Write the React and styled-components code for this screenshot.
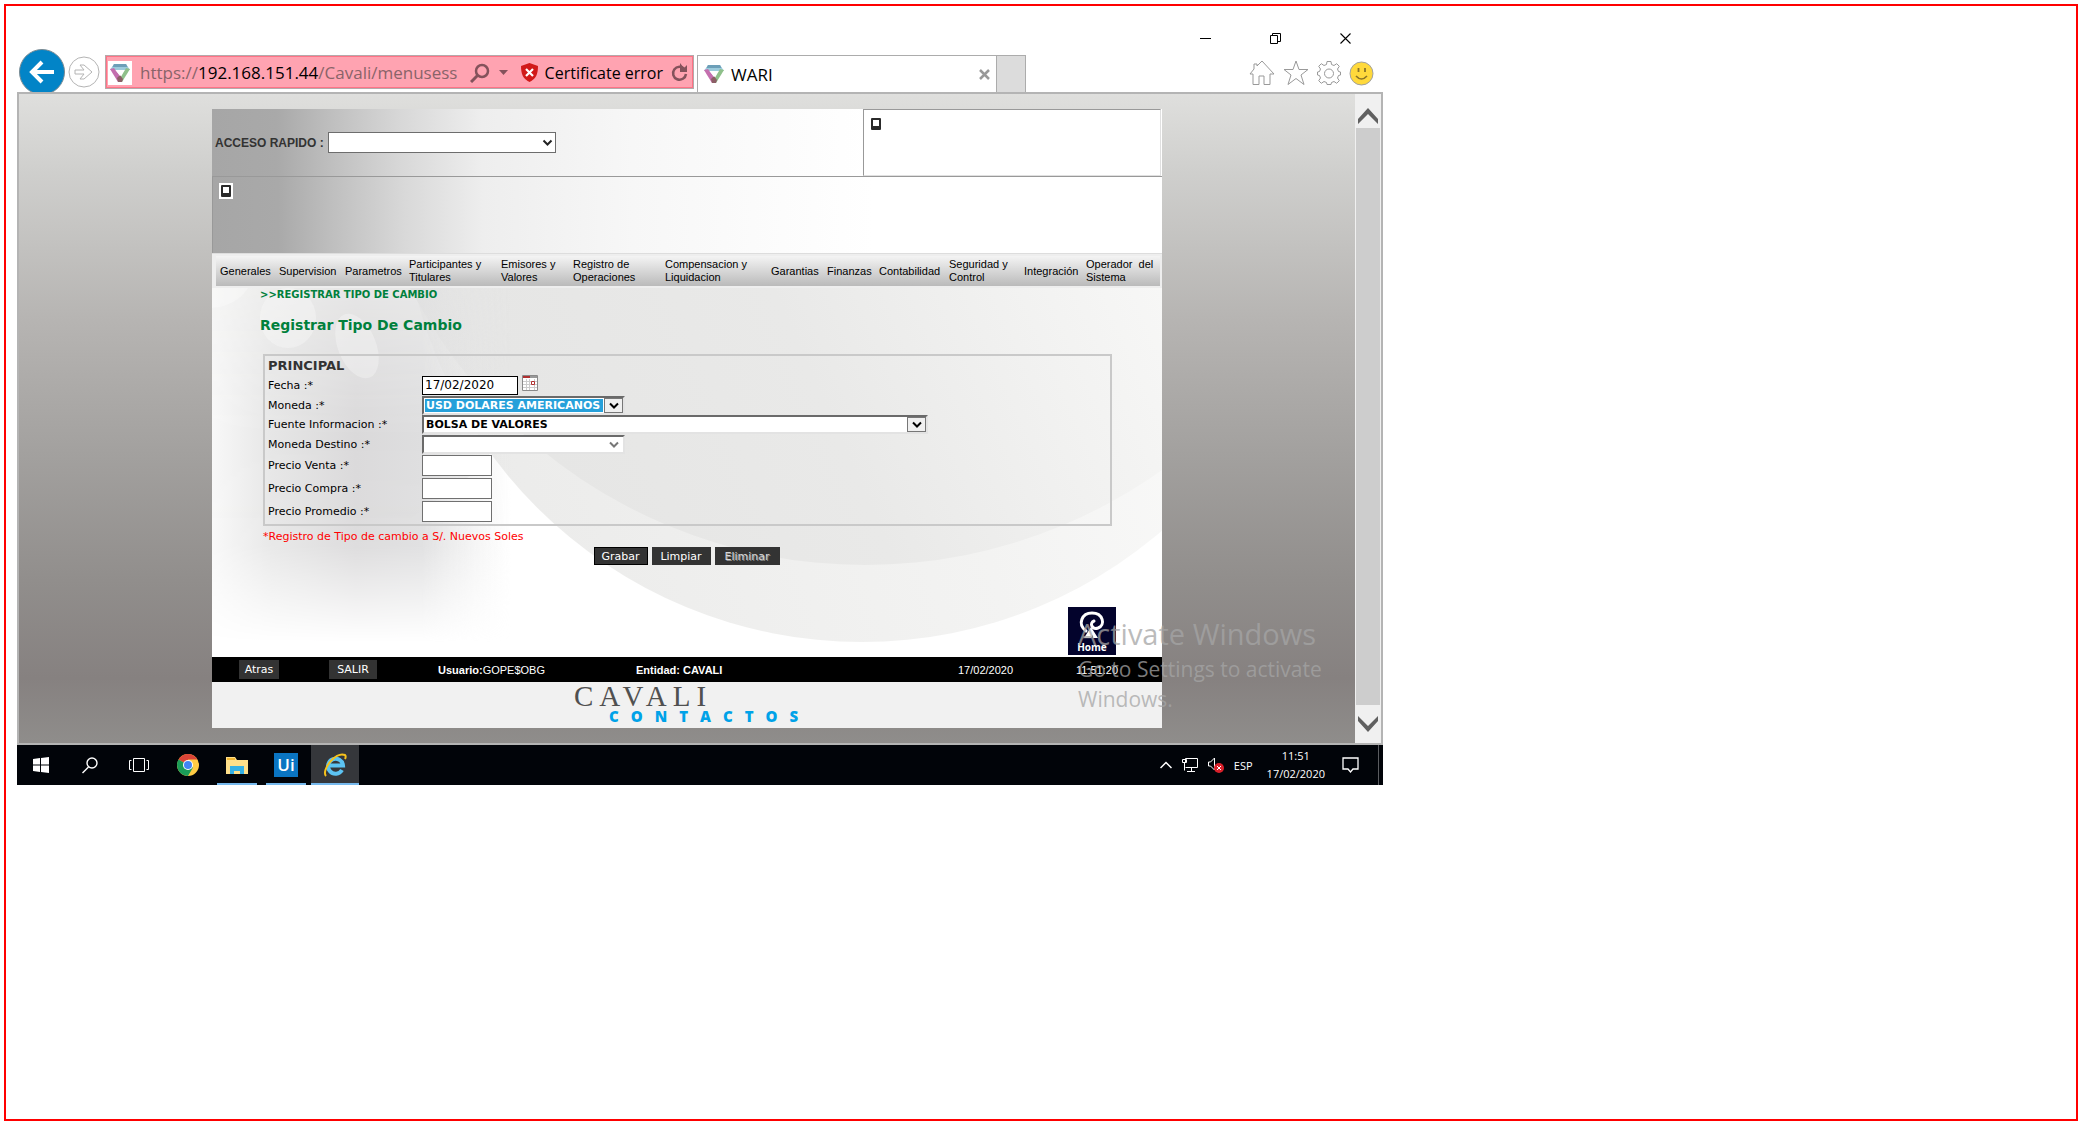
import React from "react";
import styled, { createGlobalStyle } from "styled-components";

const verdana = `Verdana, "DejaVu Sans", sans-serif`;
const arial = `Arial, "Liberation Sans", sans-serif`;
const segoe = `"Segoe UI", "Open Sans", "Noto Sans", sans-serif`;

const GlobalStyle = createGlobalStyle`
  * { box-sizing: border-box; }
  body { margin: 0; background: #fff; font-family: ${arial}; color: #000; }
  button, input, select { font: inherit; color: inherit; margin: 0; border-radius: 0; }
  button { padding: 0; border: 0; background: none; }
  h1, p { margin: 0; }
  svg { display: block; }
`;

const Frame = styled.div`
  margin: 4px;
  min-height: calc(100vh - 8px);
  padding: 0 11px;
  border: 2px solid #f00;
`;

const Desktop = styled.div`
  position: relative;
  width: 100%;
  max-width: 1366px;
`;

/* ---------- browser chrome ---------- */

const TitleBar = styled.div`
  display: flex;
  justify-content: flex-end;
  align-items: center;
  gap: 59px;
  padding: 22px 32px 0 0;
  height: 43px;
`;

const ChromeButton = styled.button`
  display: flex;
  align-items: center;
  justify-content: center;
  flex: none;
`;

const NavBar = styled.div`
  display: flex;
  align-items: flex-start;
  height: 43px;
  padding-left: 2px;
  overflow: hidden;
`;

const RoundButton = styled(ChromeButton)`
  width: ${(p) => p.$size}px;
  height: 46px;
`;

const AddressBar = styled.div`
  display: flex;
  align-items: center;
  flex: 0 1 589px;
  min-width: 0;
  height: 34px;
  margin: 6px 3px 0 3px;
  padding: 1px 5px 0 2px;
  border: 1px solid #b5a9ab;
  box-shadow: inset 0 0 0 1px #ff7386;
  background: #ffa3b1;
  font-family: ${segoe};
  font-size: 17px;
`;

const SiteIcon = styled.span`
  display: flex;
  align-items: center;
  justify-content: center;
  flex: none;
  width: 24px;
  height: 24px;
  background: #fff;
`;

const Url = styled.p`
  flex: 1;
  min-width: 0;
  overflow: hidden;
  padding-left: 8px;
  white-space: nowrap;
  color: #8a6369;
  b { font-weight: 400; color: #000; }
`;

const CertError = styled.button`
  display: flex;
  align-items: center;
  gap: 7px;
  margin: 0 8px 0 13px;
  font-size: 16px;
  white-space: nowrap;
`;

const AddressTools = styled.div`
  display: flex;
  align-items: center;
  gap: 9px;
`;

const Tab = styled.div`
  display: flex;
  align-items: center;
  gap: 7px;
  flex: 0 1 300px;
  height: 37px;
  margin-top: 6px;
  padding: 0 6px 0 6px;
  border: 1px solid #acacac;
  border-bottom: 0;
  font-family: ${segoe};
  font-size: 17px;
  span { flex: 1; }
`;

const NewTab = styled.button`
  width: 29px;
  height: 37px;
  margin-top: 6px;
  border: solid #acacac;
  border-width: 1px 1px 0 0;
  background: #dcdcdc;
`;

const ChromeTools = styled.div`
  display: flex;
  align-items: center;
  gap: 8px;
  height: 48px;
  margin-left: auto;
  padding-right: 9px;
`;

/* ---------- viewport ---------- */

const Viewport = styled.div`
  display: flex;
  border: 2px solid #b4b4b4;
`;

const PageArea = styled.main`
  flex: 1;
  min-width: 0;
  padding: 15px;
  background: linear-gradient(#dfdfdd 0, #cfcfcd 12%, #b6b4b2 35%, #a3a19f 55%, #918e8c 75%, #868180 90%, #8f8d8b 100%);
`;

const Panel = styled.div`
  width: 100%;
  max-width: 950px;
  margin: 0 auto;
  background: #fff;
`;

const ScrollBar = styled.div`
  display: flex;
  flex-direction: column;
  width: 26px;
  padding: 0 1px;
  background: #f0f0f0;
`;

const ScrollArrow = styled(ChromeButton)`
  height: ${(p) => p.$height}px;
  padding-top: ${(p) => p.$shift}px;
`;

const ScrollThumb = styled.div`
  flex: 1;
  background: #cdcdcd;
`;

/* ---------- application header ---------- */

const headerFill = `linear-gradient(90deg, #a6a6a6 0, #a9a9a9 65px, #bfbfbf 120px, #d8d8d8 190px, #eeeeee 270px, #f7f7f7 420px, #fff 660px)`;

const QuickRow = styled.div`
  display: flex;
  justify-content: space-between;
  height: 67px;
  padding-right: 1px;
  background: ${headerFill};
`;

const QuickAccess = styled.div`
  display: flex;
  align-items: center;
  padding-left: 3px;
  font-size: 12px;
  font-weight: 700;
  color: #333;
  label { margin-right: 4px; white-space: nowrap; }
`;

const LogoBox = styled.div`
  width: 298px;
  padding: 6px 5px;
  border: 1px solid #999;
  border-color: #999 #e0e0e0 #e0e0e0 #999;
  background: #fff;
`;

const Banner = styled.div`
  height: 77px;
  padding: 6px;
  border-top: 1px solid #999;
  border-left: 1px solid #999;
  background: ${headerFill};
`;

const Menu = styled.nav`
  display: grid;
  grid-template-columns: 59fr 66fr 64fr 92fr 72fr 92fr 106fr 56fr 52fr 70fr 75fr 62fr 78fr;
  align-items: center;
  height: 35px;
  padding: 2px 2px 2px 4px;
  border-top: 1px solid #ddd;
  background: linear-gradient(#f4f4f4, #bababa) content-box, #eee;
`;

const MenuItem = styled.button`
  padding-left: 4px;
  text-align: left;
  font-size: 11px;
  line-height: 13px;
  white-space: pre;
`;

/* ---------- form ---------- */

const Content = styled.section`
  position: relative;
  isolation: isolate;
  height: 369px;
  padding: 0 46px 0 48px;
  font-family: ${verdana};
`;

const Backdrop = styled.svg`
  position: absolute;
  inset: 0;
  z-index: -1;
  width: 100%;
  height: 100%;
`;

const Crumb = styled.p`
  font-size: 10px;
  line-height: 13px;
  font-weight: 700;
  color: #00803c;
`;

const Heading = styled.h1`
  margin: 16px 0 20px;
  font-size: 14px;
  line-height: 17px;
  font-weight: 700;
  color: #00803c;
`;

const Group = styled.div`
  margin: 0 4px 0 3px;
  padding: 0 3px 1px;
  border: 2px solid #c9c9c9;
`;

const GroupTitle = styled.p`
  font-size: 13px;
  line-height: 19px;
  font-weight: 700;
  color: #333;
`;

const Field = styled.div`
  display: flex;
  align-items: center;
  height: ${(p) => p.$height}px;
  font-size: 11px;
  label { flex: none; width: 154px; }
`;

const TextBox = styled.input`
  width: ${(p) => p.$width}px;
  height: ${(p) => p.$height}px;
  padding: 0 2px;
  border: 1px solid ${(p) => p.$border};
  background: #fff;
  font-size: 12px;
`;

const CalendarButton = styled.button`
  margin: 0 0 4px 4px;
`;

const SelectShell = styled.span`
  position: relative;
  display: block;
  width: ${(p) => p.$width}px;
  svg { position: absolute; pointer-events: none; }
`;

const PlainSelect = styled.select`
  display: block;
  appearance: none;
  width: 100%;
  height: 21px;
  border: 1px solid #6d6d6d;
  background: #fff;
`;

const PlainArrow = styled.svg`
  top: 7px;
  right: 3px;
`;

const InsetSelect = styled.select`
  display: block;
  appearance: none;
  width: 100%;
  height: 19px;
  padding: 0 22px 0 2px;
  border: 2px solid #6a6a6a;
  border-color: #6a6a6a #e3e3e3 #e3e3e3 #6a6a6a;
  background: ${(p) => (p.$active ? "linear-gradient(#26a0da, #26a0da) 1px 1px / calc(100% - 21px) 13px no-repeat #fff" : "#fff")};
  color: ${(p) => (p.$active ? "#fff" : "#000")};
  font-size: 11px;
  font-weight: 700;
`;

const InsetArrow = styled.svg`
  top: 2px;
  right: 2px;
`;

const Note = styled.p`
  margin: 3px 0 3px 3px;
  font-size: 11px;
  line-height: 15px;
  color: #f00;
`;

const Actions = styled.div`
  display: flex;
  justify-content: center;
  gap: 4px;
  padding-right: 3px;
`;

const DarkButton = styled.button`
  height: ${(p) => p.$height}px;
  min-width: ${(p) => p.$width}px;
  border: 1px solid ${(p) => (p.$focus ? "#000" : "#333")};
  background: #333;
  color: ${(p) => (p.$dim ? "#d8d8d8" : "#fff")};
  text-shadow: ${(p) => (p.$dim ? "1px 1px 0 #8a8a8a" : "none")};
  font-family: ${verdana};
  font-size: 11px;
`;

const HomeRow = styled.div`
  display: flex;
  justify-content: flex-end;
  margin-top: 42px;
`;

/* ---------- page footer ---------- */

const StatusBar = styled.footer`
  display: grid;
  grid-template-columns: 90fr 109fr 198fr 322fr 118fr 86fr;
  align-items: center;
  justify-items: start;
  height: 25px;
  padding-left: 27px;
  background: #000;
  color: #fff;
  font-size: 11px;
`;

const Brand = styled.div`
  display: flex;
  flex-direction: column;
  align-items: flex-start;
  height: 46px;
  padding-left: 362px;
  background: #f1f1f1;
`;

const BrandName = styled.span`
  font-family: "Liberation Serif", serif;
  font-size: 29px;
  line-height: 28px;
  letter-spacing: 6px;
  color: #505050;
`;

const BrandLink = styled.a`
  padding-left: 35px;
  font-family: ${segoe};
  font-size: 15px;
  line-height: 13px;
  font-weight: 800;
  letter-spacing: 12px;
  color: #00a2e8;
  text-decoration: none;
`;

/* ---------- desktop overlay and task bar ---------- */

const Watermark = styled.div`
  position: absolute;
  left: 1061px;
  top: 608px;
  width: 280px;
  font-family: ${segoe};
  color: rgba(165, 165, 165, 0.75);
  pointer-events: none;
`;

const WatermarkTitle = styled.p`
  font-size: 29px;
  line-height: 40px;
`;

const WatermarkText = styled.p`
  font-size: 21px;
  line-height: 30px;
`;

const TaskBar = styled.div`
  display: flex;
  align-items: stretch;
  height: 40px;
  background: #010409;
  color: #fff;
  font-family: ${segoe};
  font-size: 11px;
`;

const TaskButton = styled(ChromeButton)`
  width: 48px;
  margin-right: 1px;
  background: ${(p) =>
    p.$open
      ? `linear-gradient(#76b9ed, #76b9ed) bottom / ${p.$active ? 48 : 40}px 2px no-repeat`
      : "none"};
  background-color: ${(p) => (p.$active ? "#35373b" : "transparent")};
`;

const Tray = styled.div`
  display: flex;
  align-items: center;
  gap: 10px;
  margin-left: auto;
  padding-right: 4px;
`;

const Clock = styled.time`
  margin: 0 7px 0 4px;
  text-align: center;
  line-height: 18px;
`;

const TrayEdge = styled.span`
  width: 1px;
  height: 40px;
  margin-left: 9px;
  background: #5a5c60;
`;

/* ---------- drawings ---------- */

const WariIcon = () => (
  <svg width="20" height="18" viewBox="0 0 20 18">
    <path d="M4 0h12l4 6H0z" fill="#9ccbdc" />
    <path d="M4 0h12l1.500 3H2.500z" fill="#6c9fb8" />
    <path d="M0 5l4-1 7 9-3 5z" fill="#c46fae" />
    <path d="M20 5l-4-1-8 14h4z" fill="#8fc08a" />
    <path d="M7 14l3-3 3 4-1 3H8z" fill="#8c5f66" />
    <path d="M5.500 6h9L10 12z" fill="#fff" />
  </svg>
);

const BrokenImage = ({ boxed }) => (
  <svg width="14" height="16" viewBox="0 0 14 16" role="img" aria-label="imagen">
    {boxed && <path d="M0 0h14v16H0z" fill="#fff" />}
    <rect x="2" y="2" width="10" height="12" rx="1" fill="#2a2a2a" />
    <path d="M4 4h6v6H4z" fill="#fff" />
  </svg>
);

const Check = ({ color = "#222" }) => (
  <path d="M1.500 1.500L5.500 5.500L9.500 1.500" fill="none" stroke={color} strokeWidth="2" />
);

const ClassicArrow = ({ flat }) => (
  <InsetArrow width="19" height="15" viewBox="0 0 19 15">
    {!flat && <rect x="0.500" y="0.500" width="18" height="14" fill="#f0f0f0" stroke="#777" />}
    <g transform="translate(4.500 4)">
      <Check color={flat ? "#777" : "#000"} />
    </g>
  </InsetArrow>
);

const ContentBackdrop = () => (
  <Backdrop viewBox="0 0 950 369" preserveAspectRatio="none" aria-hidden="true">
    <defs>
      <linearGradient id="outer" x1="0" y1="0.600" x2="1" y2="0.300">
        <stop offset="0" stopColor="#ebebea" />
        <stop offset="0.500" stopColor="#f3f3f2" />
        <stop offset="1" stopColor="#fff" />
      </linearGradient>
      <linearGradient id="inner" x1="0" y1="0.900" x2="0.900" y2="0.500">
        <stop offset="0" stopColor="#e4e4e3" />
        <stop offset="0.450" stopColor="#e9e9e8" />
        <stop offset="0.750" stopColor="#f5f5f4" />
        <stop offset="1" stopColor="#fefefe" />
      </linearGradient>
      <linearGradient id="side" x1="0" x2="1" y1="0" y2="0">
        <stop offset="0" stopColor="#f8f8f8" />
        <stop offset="0.200" stopColor="#e6e6e6" />
        <stop offset="0.480" stopColor="#dad9da" />
        <stop offset="0.700" stopColor="#dededf" />
        <stop offset="1" stopColor="#e8e8e8" stopOpacity="0" />
      </linearGradient>
      <linearGradient id="fade" x1="0" x2="0" y1="0" y2="1">
        <stop offset="0" stopColor="#fff" stopOpacity="0.500" />
        <stop offset="0.400" stopColor="#fff" stopOpacity="1" />
        <stop offset="0.700" stopColor="#fff" stopOpacity="0.900" />
        <stop offset="0.960" stopColor="#fff" stopOpacity="0" />
      </linearGradient>
      <mask id="sideMask">
        <rect width="320" height="369" fill="url(#fade)" />
      </mask>
    </defs>
    <path d="M0 0H950V369H0z" fill="#fff" />
    <path d="M0 0H300Q235 90 280 172L200 230H0z" fill="#ececeb" opacity="0.700" />
    <circle cx="650" cy="-106" r="460" fill="url(#outer)" />
    <circle cx="653" cy="-235" r="512" fill="url(#inner)" />
    <rect width="300" height="369" fill="url(#side)" mask="url(#sideMask)" />
    <g fill="#fff" opacity="0.300">
      <path d="M0 0H36Q24 18 0 20z" />
      <ellipse cx="76" cy="30" rx="28" ry="30" />
      <ellipse cx="145" cy="58" rx="19" ry="34" transform="rotate(-22 145 58)" />
    </g>
  </Backdrop>
);

const HomeIcon = () => (
  <svg width="48" height="48" viewBox="0 0 48 48">
    <path d="M0 0h48v48H0z" fill="#03032c" />
    <path d="M18 24C9 17 14 6 24 6C35 6 38 18 30 21C24 23 21 16 26 14" fill="none" stroke="#fff" strokeWidth="3" strokeLinecap="round" />
    <path d="M23 20l7 11h-5v-3l-2 3h-7z" fill="#fff" />
    <text x="24" y="44" fill="#fff" fontFamily="Open Sans, sans-serif" fontSize="10" fontWeight="700" textAnchor="middle">Home</text>
  </svg>
);

const menuItems = [
  "Generales",
  "Supervision",
  "Parametros",
  "Participantes y\nTitulares",
  "Emisores y\nValores",
  "Registro de\nOperaciones",
  "Compensacion y\nLiquidacion",
  "Garantias",
  "Finanzas",
  "Contabilidad",
  "Seguridad y\nControl",
  "Integración",
  "Operador  del\nSistema",
];

const prices = [
  ["venta", "Precio Venta :*"],
  ["compra", "Precio Compra :*"],
  ["promedio", "Precio Promedio :*"],
];

function BrowserChrome() {
  return (
    <>
      <TitleBar>
        <ChromeButton aria-label="Minimize">
          <svg width="11" height="11"><path d="M0 5.500h11" stroke="#000" /></svg>
        </ChromeButton>
        <ChromeButton aria-label="Restore">
          <svg width="11" height="11" fill="none" stroke="#000">
            <path d="M0.500 2.500h7v8h-7zM2.500 2.500v-2h8v8h-3" />
          </svg>
        </ChromeButton>
        <ChromeButton aria-label="Close">
          <svg width="11" height="11"><path d="M0.500 0.500l10 10M10.500 0.500l-10 10" stroke="#000" strokeWidth="1.100" /></svg>
        </ChromeButton>
      </TitleBar>
      <NavBar>
        <RoundButton $size={46} aria-label="Back">
          <svg width="46" height="46" viewBox="0 0 46 46">
            <circle cx="23" cy="23" r="22.500" fill="#0284c7" stroke="#7a8a92" />
            <path d="M35 23H14M23 13L13 23L23 33" fill="none" stroke="#fff" strokeWidth="4" />
          </svg>
        </RoundButton>
        <RoundButton $size={37} aria-label="Forward">
          <svg width="32" height="32" viewBox="0 0 32 32" fill="none" stroke="#b4b4b4">
            <circle cx="16" cy="16" r="15" />
            <path d="M7 14h9l-4-5h4l8 7-8 7h-4l4-5H7z" />
          </svg>
        </RoundButton>
        <AddressBar>
          <SiteIcon><WariIcon /></SiteIcon>
          <Url>https://<b>192.168.151.44</b>/Cavali/menusess</Url>
          <AddressTools>
            <ChromeButton aria-label="Search">
              <svg width="20" height="20" fill="none" stroke="#84525b">
                <circle cx="12" cy="8" r="6" strokeWidth="2.500" />
                <path d="M8 12l-7 7" strokeWidth="3" />
              </svg>
            </ChromeButton>
            <ChromeButton aria-label="Show address list">
              <svg width="9" height="5"><path d="M0 0h9L4.500 5z" fill="#84525b" /></svg>
            </ChromeButton>
          </AddressTools>
          <CertError>
            <svg width="17" height="19" viewBox="0 0 17 19">
              <path d="M8.500 0L17 3C17 11 15 16 8.500 19C2 16 0 11 0 3z" fill="#d11a1a" />
              <path d="M5 6l7 7M12 6l-7 7" stroke="#fff" strokeWidth="2.200" />
            </svg>
            Certificate error
          </CertError>
          <ChromeButton aria-label="Refresh">
            <svg width="17" height="19" viewBox="0 0 17 19">
              <path d="M13.500 6A6.500 6.500 0 1 0 15 11" fill="none" stroke="#84525b" strokeWidth="2.500" />
              <path d="M9 0v9h7V2l-3 3z" fill="#84525b" />
            </svg>
          </ChromeButton>
        </AddressBar>
        <Tab>
          <WariIcon />
          <span>WARI</span>
          <ChromeButton aria-label="Close tab">
            <svg width="11" height="11"><path d="M1 1l9 9M10 1l-9 9" stroke="#999" strokeWidth="2.500" /></svg>
          </ChromeButton>
        </Tab>
        <NewTab aria-label="New tab" />
        <ChromeTools>
          <ChromeButton aria-label="Home">
            <svg width="26" height="26" viewBox="0 0 26 26" fill="none" stroke="#999">
              <path d="M4 14v10.500h6V16h5v8.500h6V14h4L13 1 8 6V4H5v5L1 14z" />
            </svg>
          </ChromeButton>
          <ChromeButton aria-label="Favorites">
            <svg width="26" height="26" viewBox="0 0 26 26" fill="none" stroke="#999">
              <path d="M13 1l3 8.500h9l-7 5.500 3 9.500-8-6-8 6 3-9.500-7-5.500h9z" />
            </svg>
          </ChromeButton>
          <ChromeButton aria-label="Tools">
            <svg width="24" height="24" viewBox="0 0 24 24" fill="none" stroke="#999">
              <path d="M10 .5h4l.5 3 2.500 1 2.700-1.800 2.600 2.600L20.500 8l1 2.500 2 .5v3l-2 .5-1 2.500 1.800 2.700-2.600 2.600-2.700-1.800-2.500 1-.5 2h-4l-.5-2-2.500-1-2.700 1.800-2.600-2.600L3.500 17l-1-2.500-2-.5v-3l2-.5 1-2.500-1.800-2.700 2.600-2.600L7 4.500l2.500-1z" />
              <circle cx="12" cy="12.500" r="4.500" />
            </svg>
          </ChromeButton>
          <ChromeButton aria-label="Feedback">
            <svg width="25" height="25" viewBox="0 0 25 25">
              <circle cx="12.500" cy="12.500" r="11.500" fill="#ffd93b" stroke="#a0a0a0" />
              <path d="M7 15q5.500 6 11 0" fill="none" stroke="#8a7428" strokeWidth="1.600" />
              <path d="M9.500 7v4M16 7v4" stroke="#8a7428" strokeWidth="1.800" />
            </svg>
          </ChromeButton>
        </ChromeTools>
      </NavBar>
    </>
  );
}

function RateForm() {
  return (
    <Content>
      <ContentBackdrop />
      <Crumb>&gt;&gt;REGISTRAR TIPO DE CAMBIO</Crumb>
      <Heading>Registrar Tipo De Cambio</Heading>
      <Group>
        <GroupTitle>PRINCIPAL</GroupTitle>
        <Field $height={20}>
          <label htmlFor="fecha">Fecha :*</label>
          <TextBox id="fecha" $width={96} $height={19} $border="#000" defaultValue="17/02/2020" />
          <CalendarButton aria-label="Calendario">
            <svg width="16" height="16" viewBox="0 0 16 16">
              <path d="M.5.500h15v15H.5z" fill="#fff" stroke="#8a8a8a" />
              <path d="M1 1h14v2H1z" fill="#999" />
              <path d="M1 1h7v2H1z" fill="#b03030" />
              <path d="M1 6.500h14M1 9.500h14M1 12.500h14M4.500 4v11M7.500 4v11M12.500 4v11" stroke="#ccc" />
              <path d="M9.500 6.500h3v3h-3z" fill="#fff" stroke="#b03030" />
            </svg>
          </CalendarButton>
        </Field>
        <Field $height={20}>
          <label htmlFor="moneda">Moneda :*</label>
          <SelectShell $width={203}>
            <InsetSelect id="moneda" $active><option>USD DOLARES AMERICANOS</option></InsetSelect>
            <ClassicArrow />
          </SelectShell>
        </Field>
        <Field $height={19}>
          <label htmlFor="fuente">Fuente Informacion :*</label>
          <SelectShell $width={506}>
            <InsetSelect id="fuente"><option>BOLSA DE VALORES</option></InsetSelect>
            <ClassicArrow />
          </SelectShell>
        </Field>
        <Field $height={20}>
          <label htmlFor="destino">Moneda Destino :*</label>
          <SelectShell $width={203}>
            <InsetSelect id="destino"><option></option></InsetSelect>
            <ClassicArrow flat />
          </SelectShell>
        </Field>
        {prices.map(([id, label]) => (
          <Field $height={23} key={id}>
            <label htmlFor={id}>{label}</label>
            <TextBox id={id} $width={70} $height={21} $border="#707070" />
          </Field>
        ))}
      </Group>
      <Note>*Registro de Tipo de cambio a S/. Nuevos Soles</Note>
      <Actions>
        <DarkButton $width={54} $height={18} $focus>Grabar</DarkButton>
        <DarkButton $width={59} $height={18}>Limpiar</DarkButton>
        <DarkButton $width={65} $height={18} $dim>Eliminar</DarkButton>
      </Actions>
      <HomeRow>
        <a href="#home" aria-label="Home"><HomeIcon /></a>
      </HomeRow>
    </Content>
  );
}

function WindowsTaskBar() {
  return (
    <TaskBar>
      <TaskButton aria-label="Start">
        <svg width="16" height="16" fill="#fff"><path d="M0 2l7-1v6.500H0zM8 1l8-1v7.500H8zM0 8.500h7V15l-7-1zM8 8.500h8V16l-8-1z" /></svg>
      </TaskButton>
      <TaskButton aria-label="Search">
        <svg width="16" height="17" fill="none" stroke="#fff" strokeWidth="1.400">
          <circle cx="10" cy="6" r="5" /><path d="M6.500 10L0.500 16" />
        </svg>
      </TaskButton>
      <TaskButton aria-label="Task view">
        <svg width="20" height="14" fill="none" stroke="#fff">
          <path d="M4.500 .500h11v13h-11zM2.500 2.500h-2v9h2M17.500 2.500h2v9h-2" />
        </svg>
      </TaskButton>
      <TaskButton aria-label="Chrome">
        <svg width="22" height="22" viewBox="0 0 22 22">
          <circle cx="11" cy="11" r="11" fill="#fc4" />
          <path d="M11 11L1.500 5.500A11 11 0 0 1 20.500 5.500H11z" fill="#db4437" />
          <path d="M11 11L1.500 5.500A11 11 0 0 0 11 22l5-8.500z" fill="#1a9c58" />
          <circle cx="11" cy="11" r="5" fill="#fff" />
          <circle cx="11" cy="11" r="4" fill="#4285f4" />
        </svg>
      </TaskButton>
      <TaskButton $open aria-label="File Explorer">
        <svg width="22" height="19" viewBox="0 0 22 19">
          <path d="M0 1h9l2 3h11v14H0z" fill="#ffe08a" />
          <path d="M1 2h8v2H1z" fill="#f2b632" />
          <path d="M4 18v-8h14v8h-4v-3H8v3z" fill="#35b1e5" />
        </svg>
      </TaskButton>
      <TaskButton $open aria-label="UiPath">
        <svg width="24" height="24" viewBox="0 0 24 24">
          <path d="M0 0h24v24H0z" fill="#0a75c2" />
          <text x="12" y="18" fill="#fff" fontFamily="Open Sans, sans-serif" fontSize="17" fontWeight="600" textAnchor="middle">Ui</text>
        </svg>
      </TaskButton>
      <TaskButton $open $active aria-label="Internet Explorer">
        <svg width="24" height="24" viewBox="0 0 24 24" fill="none">
          <path d="M19 17A7.500 7.500 0 1 1 20 12.500H7" stroke="#5cc3f2" strokeWidth="4" />
          <path d="M3 23C-2 18 12 -2 22 2C23 3 23 4 22 6" stroke="#f6c21c" strokeWidth="2" />
        </svg>
      </TaskButton>
      <Tray>
        <ChromeButton aria-label="Show hidden icons">
          <svg width="12" height="8" fill="none" stroke="#fff" strokeWidth="1.500"><path d="M0.500 7L6 1.500 11.500 7" /></svg>
        </ChromeButton>
        <svg width="16" height="14" fill="none" stroke="#fff">
          <path d="M3.500 4V.5h12v9h-12M.5 1.500h4v3h-4zM2.500 4.500v8M9.500 9.500v4M5 13.500h8" />
        </svg>
        <svg width="16" height="16" viewBox="0 0 16 16" fill="none" stroke="#fff">
          <path d="M6.500 1v12l-4-4h-2V5h2z" />
          <circle cx="11" cy="11" r="5" fill="#d8202a" stroke="none" />
          <path d="M9 9l4 4M13 9l-4 4" />
        </svg>
        <span>ESP</span>
        <Clock>11:51<br />17/02/2020</Clock>
        <ChromeButton aria-label="Notifications">
          <svg width="17" height="16" fill="none" stroke="#fff" strokeWidth="1.300">
            <path d="M1 1h15v11h-5l-2.500 3L6 12H1z" />
          </svg>
        </ChromeButton>
        <TrayEdge />
      </Tray>
    </TaskBar>
  );
}

export default function App() {
  return (
    <Frame>
      <GlobalStyle />
      <Desktop>
        <BrowserChrome />
        <Viewport>
          <PageArea>
            <Panel>
              <QuickRow>
                <QuickAccess>
                  <label htmlFor="acceso">ACCESO RAPIDO :</label>
                  <SelectShell $width={228}>
                    <PlainSelect id="acceso"><option></option></PlainSelect>
                    <PlainArrow width="11" height="8"><Check /></PlainArrow>
                  </SelectShell>
                </QuickAccess>
                <LogoBox><BrokenImage /></LogoBox>
              </QuickRow>
              <Banner><BrokenImage boxed /></Banner>
              <Menu>
                {menuItems.map((item) => <MenuItem key={item}>{item}</MenuItem>)}
              </Menu>
              <RateForm />
              <StatusBar>
                <DarkButton $width={40} $height={19}>Atras</DarkButton>
                <DarkButton $width={48} $height={19}>SALIR</DarkButton>
                <span><b>Usuario:</b>GOPE$OBG</span>
                <b>Entidad: CAVALI</b>
                <span>17/02/2020</span>
                <span>11:51:20</span>
              </StatusBar>
              <Brand>
                <BrandName>CAVALI</BrandName>
                <BrandLink href="#contactos">CONTACTOS</BrandLink>
              </Brand>
            </Panel>
          </PageArea>
          <ScrollBar>
            <ScrollArrow $height={34} $shift={9} aria-label="Scroll up">
              <svg width="20" height="16"><path d="M0 11L10 0 20 11v5L10 6 0 16z" fill="#606060" /></svg>
            </ScrollArrow>
            <ScrollThumb />
            <ScrollArrow $height={38} $shift={0} aria-label="Scroll down">
              <svg width="20" height="16"><path d="M0 5L10 16 20 5V0L10 10 0 0z" fill="#606060" /></svg>
            </ScrollArrow>
          </ScrollBar>
        </Viewport>
        <WindowsTaskBar />
        <Watermark>
          <WatermarkTitle>Activate Windows</WatermarkTitle>
          <WatermarkText>Go to Settings to activate Windows.</WatermarkText>
        </Watermark>
      </Desktop>
    </Frame>
  );
}
